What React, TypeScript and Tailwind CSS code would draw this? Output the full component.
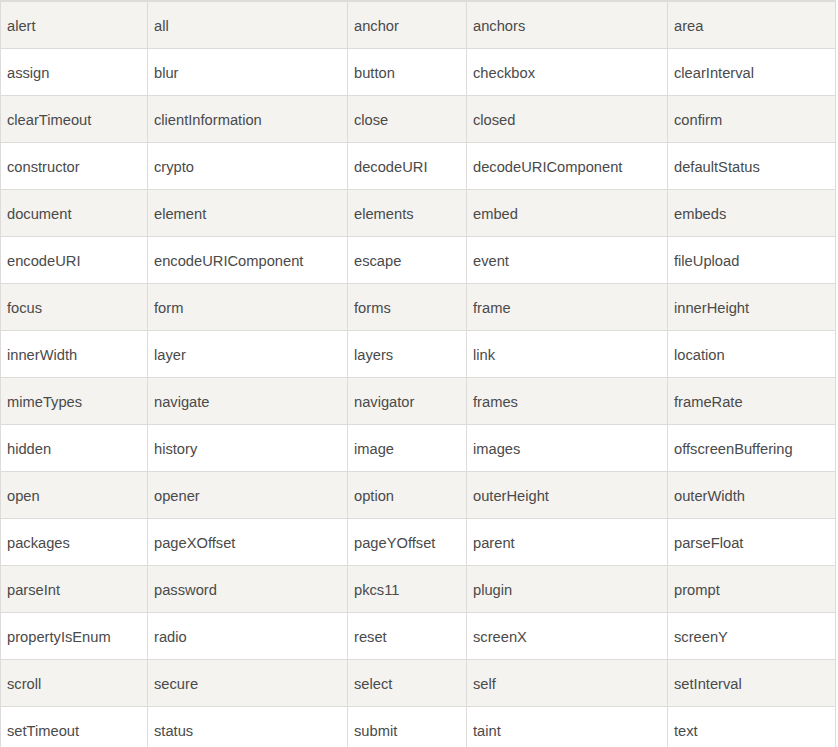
const rows: string[][] = [
  ['alert', 'all', 'anchor', 'anchors', 'area'],
  ['assign', 'blur', 'button', 'checkbox', 'clearInterval'],
  ['clearTimeout', 'clientInformation', 'close', 'closed', 'confirm'],
  ['constructor', 'crypto', 'decodeURI', 'decodeURIComponent', 'defaultStatus'],
  ['document', 'element', 'elements', 'embed', 'embeds'],
  ['encodeURI', 'encodeURIComponent', 'escape', 'event', 'fileUpload'],
  ['focus', 'form', 'forms', 'frame', 'innerHeight'],
  ['innerWidth', 'layer', 'layers', 'link', 'location'],
  ['mimeTypes', 'navigate', 'navigator', 'frames', 'frameRate'],
  ['hidden', 'history', 'image', 'images', 'offscreenBuffering'],
  ['open', 'opener', 'option', 'outerHeight', 'outerWidth'],
  ['packages', 'pageXOffset', 'pageYOffset', 'parent', 'parseFloat'],
  ['parseInt', 'password', 'pkcs11', 'plugin', 'prompt'],
  ['propertyIsEnum', 'radio', 'reset', 'screenX', 'screenY'],
  ['scroll', 'secure', 'select', 'self', 'setInterval'],
  ['setTimeout', 'status', 'submit', 'taint', 'text'],
];

export default function App() {
  return (
    <div className="bg-white min-h-screen">
      {/* reserved words table */}
      <div className="w-[836px] bg-[#dddcda] pt-[2px] px-px pb-px grid grid-cols-[146px_199px_118px_200px_167px] gap-px font-['Liberation_Sans',Arial,sans-serif] text-[14.7px] text-[#4a4a4a]">
        {rows.map((row, i) =>
          row.map((cell) => (
            <div
              key={i + cell}
              className={`h-[46px] flex items-center px-[6px] pt-[2px] ${i % 2 === 0 ? 'bg-[#f4f3f0]' : 'bg-white'}`}
            >
              {cell}
            </div>
          ))
        )}
      </div>
    </div>
  );
}
